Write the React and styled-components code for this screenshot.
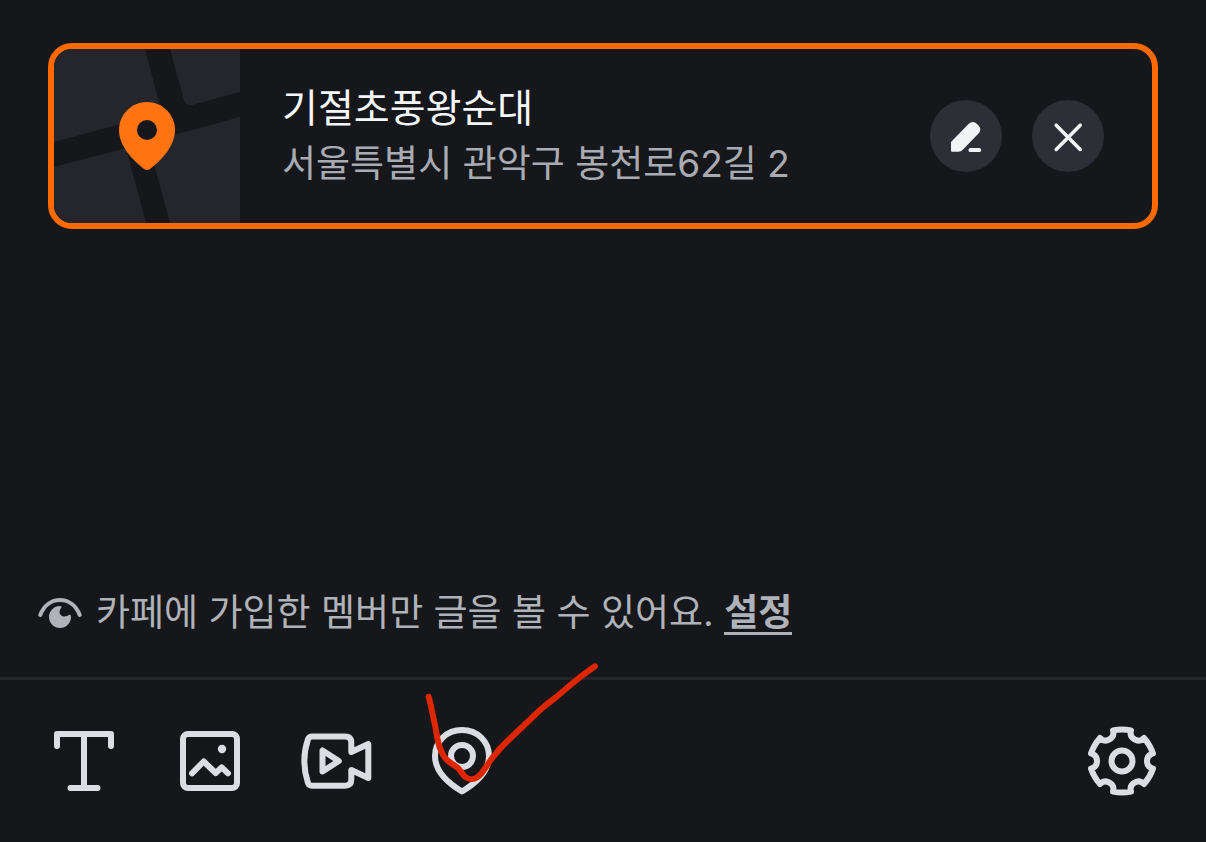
import React from "react";
import styled, { createGlobalStyle } from "styled-components";

// outline of the gear: six teeth, with a rounded notch every 60 degrees
const gearPath = () => {
  const at = (angle, radial, side) => {
    const a = (angle * Math.PI) / 180;
    const x = 36 + radial * Math.cos(a) - side * Math.sin(a);
    const y = 36 + radial * Math.sin(a) + side * Math.cos(a);
    return `${x.toFixed(2)} ${y.toFixed(2)}`;
  };
  const notches = [0, 60, 120, 180, 240, 300].map(
    (a, i) =>
      `${i === 0 ? "M" : "A46 46 0 0 1 "}${at(a, 31, -7.5)}` +
      `L${at(a, 29, -6.8)}` +
      `C${at(a, 26, -5.5)} ${at(a, 25, -3)} ${at(a, 25, 0)}` +
      `C${at(a, 25, 3)} ${at(a, 26, 5.5)} ${at(a, 29, 6.8)}` +
      `L${at(a, 31, 7.5)}`
  );
  return `${notches.join("")}A46 46 0 0 1 ${at(0, 31, -7.5)}Z`;
};

const MapPreview = () => (
  <MapDrawing viewBox="0 0 186 174" preserveAspectRatio="xMidYMid slice" aria-hidden="true">
    <g fill="#25262b">
      <path d="M0 0H91L108 64L0 93Z" />
      <path d="M116 0L130 51Q132 57 138 56L186 43V0Z" />
      <path d="M0 118L72 99L92 174H0Z" />
      <path d="M186 68L94 93L116 174H186Z" />
    </g>
    <path
      fill="#ff7410"
      d="M93 53C108.500 53 121 65.500 121 81C121 96 109 110 96 120Q93 122 90 120C77 110 65 96 65 81C65 65.500 77.500 53 93 53Z"
    />
    <circle cx="93" cy="81" r="10" fill="#16171a" />
  </MapDrawing>
);

const PlaceCard = () => (
  <Card>
    <MapPreview />
    <PlaceText>
      <PlaceName>기절초풍왕순대</PlaceName>
      <PlaceAddress>서울특별시 관악구 봉천로62길 2</PlaceAddress>
    </PlaceText>
    <CardActions>
      <RoundButton type="button" aria-label="수정">
        <svg viewBox="0 0 72 72" fill="#f2f3f5">
          <path d="M21 42L38.500 24Q43 20 47 24L48.500 25.500Q52 29.500 48.500 33.500L33 49.500Q31 51.700 28.500 51.700H22Q21 51.700 21 50.700Z" />
          <rect x="38.600" y="48" width="12.400" height="4" rx="1.500" />
        </svg>
      </RoundButton>
      <RoundButton type="button" aria-label="삭제">
        <svg viewBox="0 0 72 72" fill="none" stroke="#f2f3f5" strokeWidth="3.600" strokeLinecap="round">
          <path d="M24.200 25.200L48.200 49.400M48.200 25.200L24.200 49.400" />
        </svg>
      </RoundButton>
    </CardActions>
  </Card>
);

const Notice = () => (
  <NoticeRow>
    <EyeIcon viewBox="0 0 44 32" aria-hidden="true">
      <path
        d="M2.300 18C6 8.500 13.500 3 22 3S38 8.500 41.700 18"
        fill="none"
        stroke="#b0b2b9"
        strokeWidth="4"
        strokeLinecap="round"
      />
      <path
        fill="#b0b2b9"
        d="M22 9Q24.500 9 23.300 10.800C19.500 15 22.500 19.500 26 19.500C28.500 19.500 29.800 18.800 31 17.800Q33 17 33 20A11 11 0 1 1 22 9Z"
      />
    </EyeIcon>
    <NoticeText>
      카페에 가입한 멤버만 글을 볼 수 있어요. <SettingLink href="#setting">설정</SettingLink>
    </NoticeText>
  </NoticeRow>
);

const Toolbar = () => (
  <Bar>
    <ToolGroup>
      <ToolButton type="button" aria-label="텍스트">
        <svg viewBox="0 0 72 72">
          <path d="M9 21V9H63V21M36 9V63M22.500 63H49.500" />
        </svg>
      </ToolButton>
      <ToolButton type="button" aria-label="사진">
        <svg viewBox="0 0 72 72">
          <rect x="9" y="9" width="54" height="54" rx="5" />
          <path d="M18 48.300L29.700 36.500L41.700 48L47.700 42.300L54 48.300" />
          <circle cx="48" cy="24" r="4.200" fill="#dcdde2" stroke="none" />
        </svg>
      </ToolButton>
      <ToolButton type="button" aria-label="동영상">
        <svg viewBox="0 0 72 72">
          <path d="M12 11.500H45Q51.300 11.500 51.300 17.500V27L68.300 19V53L51.300 45V54.500Q51.300 60.700 45 60.700H12Q9 60.700 8 58C3 43 3 29 8 14.300Q9 11.500 12 11.500Z" />
          <path d="M22.500 25.500V46.500L38.800 36Z" />
        </svg>
      </ToolButton>
      <ToolButton type="button" aria-label="장소">
        <svg viewBox="0 0 72 72">
          <path d="M36 5C51.500 5 63 16.500 63 31C63 45 51 57.500 36 66.500C21 57.500 9 45 9 31C9 16.500 20.500 5 36 5Z" />
          <circle cx="36" cy="31" r="11" />
        </svg>
        <CheckMark viewBox="0 0 72 72" aria-hidden="true">
          <path d="M2.700 -28.300C6 -16 7 -8 9 0C11 10 11.500 17 14 23.300C15.500 27.500 17 30.500 20 34C24 38.500 28.500 40 32.300 43.300C35 46 36.500 49.500 39 51.700C43 55 49 55.500 54.700 49.300C59 44 63 37 67.300 31.700Q73 24 80.700 16.700L114 -15Q122 -22 130.700 -28.300L142.300 -38.300Q156 -50 169 -58.700" />
        </CheckMark>
      </ToolButton>
    </ToolGroup>
    <ToolButton type="button" aria-label="설정">
      <svg viewBox="0 0 72 72">
        <path d={gearPath()} />
        <circle cx="36" cy="36" r="10.500" />
      </svg>
    </ToolButton>
  </Bar>
);

const App = () => {
  return (
    <>
      <GlobalStyle />
      <Page>
        <Content>
          <PlaceCard />
        </Content>
        <Notice />
        <Toolbar />
      </Page>
    </>
  );
};

export default App;

const GlobalStyle = createGlobalStyle`
  * {
    box-sizing: border-box;
  }
  body {
    margin: 0;
    background: #16171a;
    font-family: Inter, "Noto Sans CJK KR", sans-serif;
  }
  button {
    padding: 0;
    border: none;
    background: none;
    cursor: pointer;
  }
  svg {
    display: block;
  }
`;
const Page = styled.div`
  display: flex;
  flex-direction: column;
  min-height: 100vh;
`;
const Content = styled.main`
  flex: 1;
  padding: 43px 48px;
`;
const Card = styled.section`
  display: flex;
  align-items: center;
  border: 6px solid #ff6a00;
  border-radius: 24px;
  overflow: hidden;
`;
const MapDrawing = styled.svg`
  flex: none;
  width: 186px;
  height: 174px;
`;
const PlaceText = styled.div`
  flex: 1;
  min-width: 0;
  padding-left: 42px;
`;
const PlaceName = styled.h2`
  margin: 0;
  color: #f5f6f8;
  font-size: 39px;
  font-weight: 400;
  line-height: 56px;
`;
const PlaceAddress = styled.p`
  margin: 0;
  color: #a9abb2;
  font-size: 37px;
  font-weight: 400;
  line-height: 56px;
`;
const CardActions = styled.div`
  display: flex;
  gap: 30px;
  padding: 0 48px;
`;
const RoundButton = styled.button`
  width: 72px;
  height: 72px;
  border-radius: 50%;
  background: #2d2f36;
`;
const NoticeRow = styled.div`
  display: flex;
  align-items: center;
  gap: 14px;
  padding: 0 38px 36px;
`;
const EyeIcon = styled.svg`
  flex: none;
  width: 44px;
  height: 32px;
`;
const NoticeText = styled.p`
  margin: 0;
  color: #b0b2b9;
  font-size: 37px;
  font-weight: 400;
  line-height: 56px;
`;
const SettingLink = styled.a`
  display: inline-block;
  color: #b0b2b9;
  font-weight: 700;
  line-height: 38px;
  text-decoration: none;
  border-bottom: 3px solid #b0b2b9;
`;
const Bar = styled.footer`
  display: flex;
  justify-content: space-between;
  padding: 45px 48px;
  border-top: 3px solid #25262b;
`;
const ToolGroup = styled.div`
  display: flex;
  gap: 54px;
`;
const ToolButton = styled.button`
  position: relative;
  width: 72px;
  height: 72px;
  svg {
    fill: none;
    stroke: #dcdde2;
    stroke-width: 6;
    stroke-linecap: round;
    stroke-linejoin: round;
  }
`;
const CheckMark = styled.svg`
  position: absolute;
  top: 0;
  left: 0;
  width: 72px;
  height: 72px;
  overflow: visible;
  pointer-events: none;
  && {
    stroke: #de2600;
  }
`;
